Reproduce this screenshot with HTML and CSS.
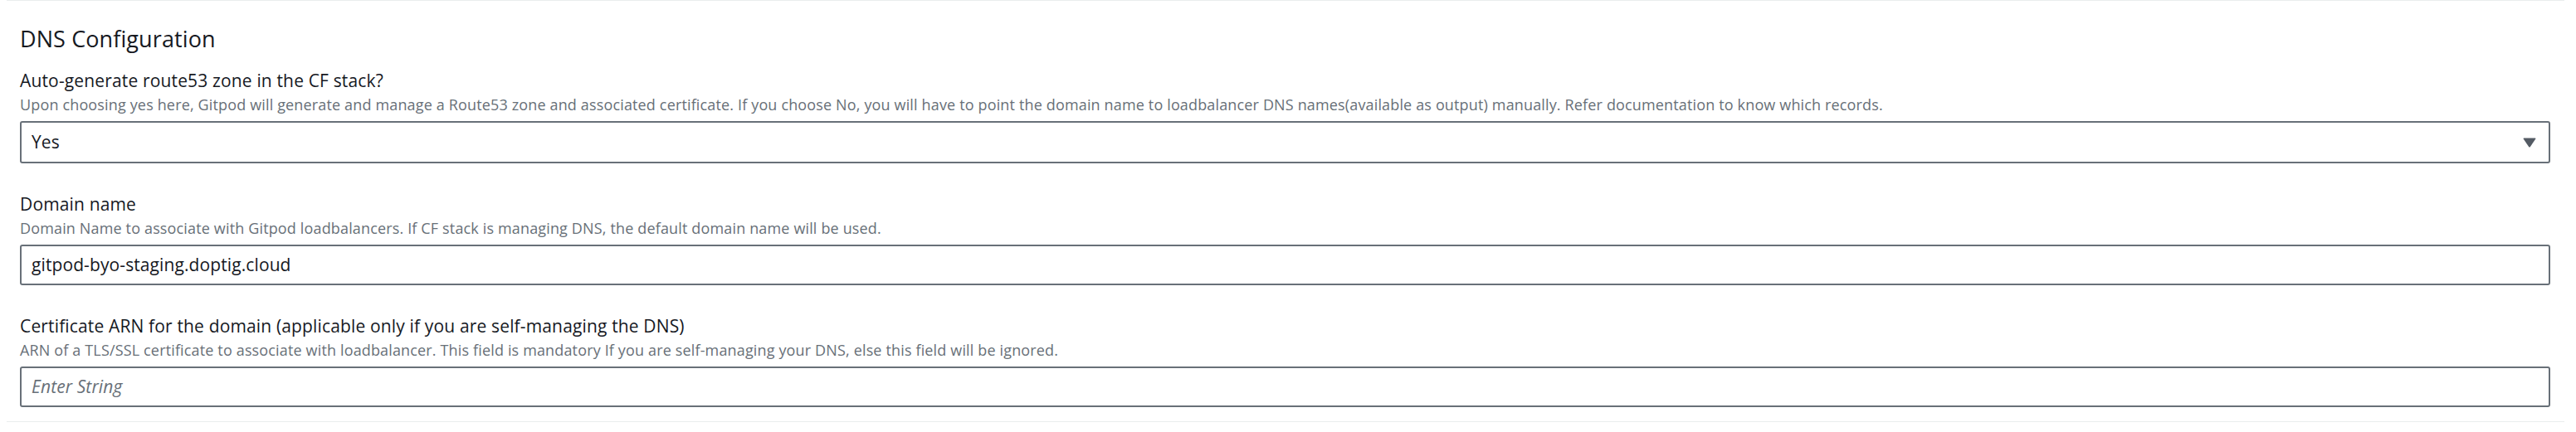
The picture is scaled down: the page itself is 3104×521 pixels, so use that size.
FILE: index.html
```html
<!DOCTYPE html>
<html lang="en">
<head>
<meta charset="utf-8">
<title>DNS Configuration</title>
<link rel="stylesheet" href="styles.css">
</head>
<body>
<section class="panel">
  <h2 class="panel-title">DNS Configuration</h2>

  <div class="field">
    <div class="field-label">Auto-generate route53 zone in the CF stack?</div>
    <div class="field-desc">Upon choosing yes here, Gitpod will generate and manage a Route53 zone and associated certificate. If you choose No, you will have to point the domain name to loadbalancer DNS names(available as output) manually. Refer documentation to know which records.</div>
    <div class="select">
      <span class="select-value">Yes</span>
      <svg class="caret" width="16" height="12" viewBox="0 0 16 12" aria-hidden="true"><path d="M1.2 0.5 H14.8 Q16 0.5 15.3 1.6 L8.9 11 Q8 12.2 7.1 11 L0.7 1.6 Q0 0.5 1.2 0.5 Z" fill="#545b64"/></svg>
    </div>
  </div>

  <div class="field">
    <div class="field-label">Domain name</div>
    <div class="field-desc">Domain Name to associate with Gitpod loadbalancers. If CF stack is managing DNS, the default domain name will be used.</div>
    <div class="input"><span class="input-value">gitpod-byo-staging.doptig.cloud</span></div>
  </div>

  <div class="field">
    <div class="field-label">Certificate ARN for the domain (applicable only if you are self-managing the DNS)</div>
    <div class="field-desc">ARN of a TLS/SSL certificate to associate with loadbalancer. This field is mandatory If you are self-managing your DNS, else this field will be ignored.</div>
    <div class="input"><span class="input-placeholder">Enter String</span></div>
  </div>
</section>
</body>
</html>
```

FILE: styles.css
```css
html, body {
  margin: 0;
  padding: 0;
  background: #ffffff;
}

body {
  font-family: "Open Sans", "Noto Sans", "Liberation Sans", sans-serif;
  color: #16191f;
}

.panel {
  margin: 0 14px 0 8px;
  border-top: 1px solid #eaeded;
  border-bottom: 1px solid #eaeded;
  padding: 27px 17px 17px 16px;
  display: flex;
  flex-direction: column;
}

.panel-title {
  margin: 0 0 16px 0;
  font-size: 27px;
  line-height: 37px;
  font-weight: 400;
  color: #16191f;
  letter-spacing: 0.1px;
}

.field {
  display: flex;
  flex-direction: column;
}

.field + .field {
  margin-top: 33px;
}

.field-label {
  font-size: 21px;
  line-height: 33px;
  color: #16191f;
  letter-spacing: 0.15px;
}

.field-desc {
  font-size: 18px;
  line-height: 24px;
  color: #687078;
  margin-bottom: 8px;
  letter-spacing: 0.15px;
}

.select,
.input {
  box-sizing: border-box;
  border: 2px solid #687078;
  border-radius: 3px;
  display: flex;
  align-items: center;
  padding: 0 15px 2px 12px;
  font-size: 21px;
  color: #16191f;
  letter-spacing: 0.1px;
}

.select {
  height: 51px;
  justify-content: space-between;
}

.input {
  height: 49px;
}

.caret {
  display: block;
  margin-top: 2px;
}

.input-placeholder {
  font-style: italic;
  color: #687078;
}
```
